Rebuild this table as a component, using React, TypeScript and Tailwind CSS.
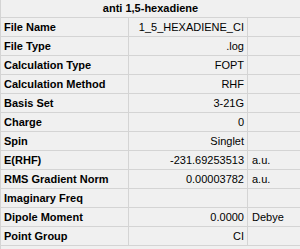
const ROWS: { label: string; value: string; unit?: string }[] = [
  { label: 'File Name', value: '1_5_HEXADIENE_CI' },
  { label: 'File Type', value: '.log' },
  { label: 'Calculation Type', value: 'FOPT' },
  { label: 'Calculation Method', value: 'RHF' },
  { label: 'Basis Set', value: '3-21G' },
  { label: 'Charge', value: '0' },
  { label: 'Spin', value: 'Singlet' },
  { label: 'E(RHF)', value: '-231.69253513', unit: 'a.u.' },
  { label: 'RMS Gradient Norm', value: '0.00003782', unit: 'a.u.' },
  { label: 'Imaginary Freq', value: '' },
  { label: 'Dipole Moment', value: '0.0000', unit: 'Debye' },
  { label: 'Point Group', value: 'CI' },
];

export default function App() {
  return (
    <div
      className="w-[300px] h-[249px] bg-[#f0f0f0] border-l border-[#d4d4d4] text-[11px] text-black overflow-hidden"
      style={{ fontFamily: '"Liberation Sans", Arial, sans-serif' }}
    >
      <div className="h-[18px] border-b border-[#d4d4d4] flex items-center justify-center font-bold leading-none">
        anti 1,5-hexadiene
      </div>
      {ROWS.map(row => (
        <div key={row.label} className="h-[19px] border-b border-[#d4d4d4] flex leading-none">
          <div className="w-[128px] border-r border-[#d4d4d4] flex items-center pl-[3px] font-bold">
            {row.label}
          </div>
          <div className="w-[119px] border-r border-[#d4d4d4] flex items-center justify-end pr-[3px]">
            {row.value}
          </div>
          <div className="flex-1 flex items-center pl-[4px]">{row.unit}</div>
        </div>
      ))}
    </div>
  );
}
